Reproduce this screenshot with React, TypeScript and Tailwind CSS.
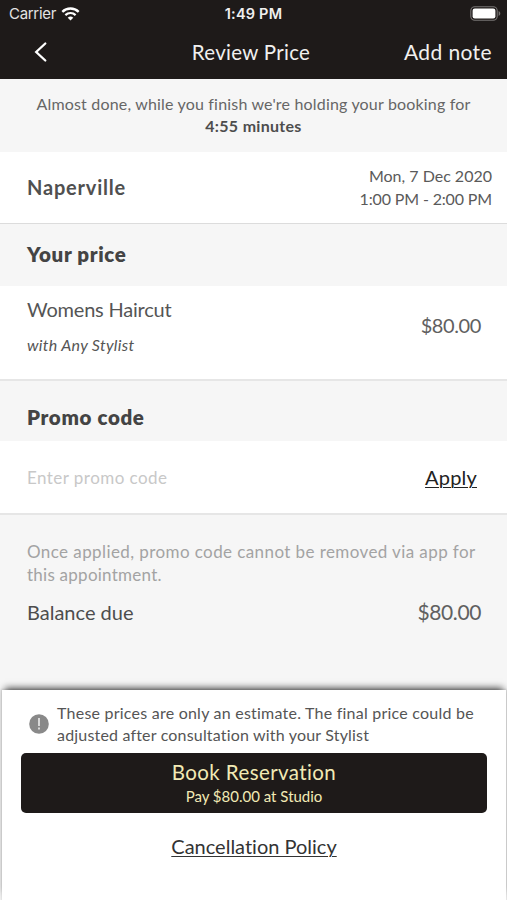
import type { ReactNode } from 'react';

interface SectionTitleProps {
  className: string;
  children: ReactNode;
}

function WifiIcon() {
  return (
    <svg width="19" height="14" viewBox="0 0 19 14" fill="none">
      <path d="M1.3 4.9a11.6 11.6 0 0 1 16.4 0" stroke="#fff" strokeWidth="2.3" />
      <path d="M4.4 8.1a7.2 7.2 0 0 1 10.2 0" stroke="#fff" strokeWidth="2.2" />
      <path d="M9.5 13.6 6.7 10.8a4 4 0 0 1 5.6 0Z" fill="#fff" />
    </svg>
  );
}

function BatteryIcon() {
  return (
    <svg width="31" height="15" viewBox="0 0 31 15" fill="none">
      <rect x="0.8" y="0.8" width="26.4" height="13.4" rx="4" stroke="#777473" strokeWidth="1.1" />
      <rect x="2.6" y="2.6" width="22.8" height="9.8" rx="2.2" fill="#fff" />
      <path d="M28.6 5v5c1-.4 1.7-1.3 1.7-2.5S29.6 5.4 28.6 5Z" fill="#777473" />
    </svg>
  );
}

function StatusBar() {
  return (
    <div className="grid h-7 grid-cols-3 items-center pl-[9px] pr-[6px] font-['Inter',sans-serif] text-[15px] leading-7">
      <div className="flex items-center gap-[5px]">
        <span className="tracking-[-0.3px] text-[#e4e3e3]">Carrier</span>
        <WifiIcon />
      </div>
      <span className="ml-[-3px] text-center text-[14.5px] font-semibold tracking-[0.2px] text-[#f0efef]">1:49 PM</span>
      <div className="mt-[-1px] flex justify-end">
        <BatteryIcon />
      </div>
    </div>
  );
}

function NavBar() {
  return (
    <div className="grid h-[48px] grid-cols-[1fr_auto_1fr] items-center pl-[34px] pr-[15px] text-[21px] tracking-[0.4px] text-[#f1f0ef]">
      <svg width="14" height="22" viewBox="0 0 14 22" fill="none">
        <path d="M11.3 2.5 2.2 11l9.1 8.5" stroke="#fff" strokeWidth="2.3" strokeLinecap="round" />
      </svg>
      <h1 className="ml-[-24px] text-[20.5px] tracking-[0.3px]">Review Price</h1>
      <span className="text-right">Add note</span>
    </div>
  );
}

function SectionTitle({ className, children }: SectionTitleProps) {
  return (
    <h2 className={`flex items-center bg-[#f6f6f6] pl-[27px] text-[20.5px] font-extrabold tracking-[0.65px] text-[#444] ${className}`}>
      {children}
    </h2>
  );
}

export default function App() {
  return (
    <div className="flex h-[900px] w-[507px] flex-col overflow-hidden bg-[#f6f6f6] font-['Lato',sans-serif] text-[#4d4d4d] [font-variant-ligatures:none]">
      <header className="h-[79px] shrink-0 bg-[#1e1a19]">
        <StatusBar />
        <NavBar />
      </header>

      <p className="h-[73px] shrink-0 pt-[14px] text-center text-[16px] leading-[22px] tracking-[0.18px] text-[#666]">
        Almost done, while you finish we're holding your booking for
        <br />
        <b className="tracking-[0.3px] text-[#4d4d4d]">4:55 minutes</b>
      </p>

      <div className="flex h-[72px] shrink-0 items-center justify-between border-b border-[#dcdcdc] bg-white pb-[2px] pl-[27px] pr-[15px]">
        <span className="text-[20px] font-bold tracking-[0.8px] text-[#505050]">Naperville</span>
        <div className="text-right text-[16px] leading-[23px] text-[#5a5a5a]">
          <p>Mon, 7 Dec 2020</p>
          <p className="tracking-[-0.15px]">1:00 PM - 2:00 PM</p>
        </div>
      </div>

      <SectionTitle className="h-[62px] shrink-0 pb-[2px]">Your price</SectionTitle>
      <div className="flex h-[95px] shrink-0 items-center justify-between border-b-2 border-[#e6e6e6] bg-white pb-[12px] pl-[27px] pr-[26px]">
        <div>
          <p className="text-[20px] leading-[36px] tracking-[-0.2px] text-[#555]">Womens Haircut</p>
          <p className="text-[16px] leading-[36px] tracking-[0.3px] text-[#555] italic">with Any Stylist</p>
        </div>
        <span className="mt-[-3px] text-[20px] tracking-[-0.4px] text-[#606060]">$80.00</span>
      </div>

      <SectionTitle className="h-[60px] shrink-0 pt-[12px]">Promo code</SectionTitle>
      <div className="flex h-[74px] shrink-0 items-center justify-between border-b-2 border-[#e6e6e6] bg-white pl-[27px] pr-[30px]">
        <input
          className="mt-[2px] w-[250px] text-[17px] tracking-[0.45px] outline-none placeholder:text-[#c8c8c8]"
          placeholder="Enter promo code"
        />
        <button className="text-[20px] tracking-[0.2px] text-[#222] underline decoration-1 underline-offset-2">Apply</button>
      </div>

      <div className="h-[175px] shrink-0 pl-[27px] pr-[26px] pt-[25px]">
        <p className="whitespace-nowrap text-[17px] leading-[23px] tracking-[0.41px] text-[#a3a3a3]">
          Once applied, promo code cannot be removed via app for
          <br />
          <span className="tracking-[0.25px]">this appointment.</span>
        </p>
        <div className="mt-[11px] flex items-center justify-between text-[20px] leading-[30px]">
          <span>Balance due</span>
          <span className="text-[21px] tracking-[-0.4px] text-[#606060]">$80.00</span>
        </div>
      </div>

      <footer className="ml-[2px] mr-px flex grow flex-col items-center bg-white px-[19px] pt-[12px] shadow-[0_-5px_7px_-3px_rgba(0,0,0,0.7),0_0_2px_1px_rgba(0,0,0,0.1)]">
        <div className="flex w-full items-center gap-[8px] pl-[8px]">
          <svg className="mt-[1px] shrink-0" width="20" height="20" viewBox="0 0 20 20">
            <circle cx="10" cy="10" r="9.8" fill="#898989" />
            <path d="M10 4v8M10 13.6v2" stroke="#f4f4f4" strokeWidth="1.5" />
          </svg>
          <p className="whitespace-nowrap text-[16px] leading-[21.5px] tracking-[0.23px] text-[#555]">
            These prices are only an estimate. The final price could be
            <br />
            <span className="tracking-[0.18px]">adjusted after consultation with your Stylist</span>
          </p>
        </div>
        <button className="mt-[8px] h-[60px] w-[466px] rounded-[5px] bg-[#1e1a19] pt-[2px] text-[#f2eab5]">
          <span className="block text-[20.5px] leading-[25px] tracking-[0.4px]">Book Reservation</span>
          <span className="block text-[15px] leading-[23px]">Pay $80.00 at Studio</span>
        </button>
        <button className="mt-[19px] text-[20px] leading-[28px] text-[#333] underline decoration-1 underline-offset-2">
          Cancellation Policy
        </button>
      </footer>
    </div>
  );
}
